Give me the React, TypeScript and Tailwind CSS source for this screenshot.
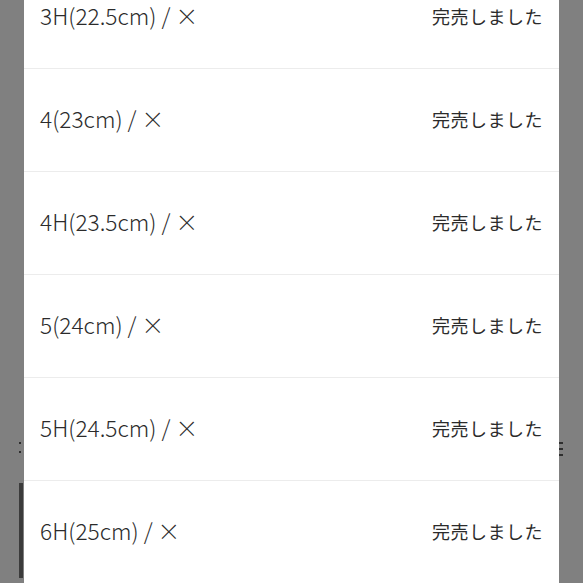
const sizes = [
  '3H(22.5cm)',
  '4(23cm)',
  '4H(23.5cm)',
  '5(24cm)',
  '5H(24.5cm)',
  '6H(25cm)',
];

export default function App() {
  return (
    <div className="flex h-[583px] w-[583px] overflow-hidden bg-[#808080] font-['Noto_Sans_CJK_JP',sans-serif]">
      {/* left gutter: page behind the overlay */}
      <div className="flex w-[24px] shrink-0 flex-col pl-[19px]">
        <div className="mt-[442px] h-[2px] w-[2px] bg-[#2e2e2e]" />
        <div className="mt-[7px] h-[2px] w-[2px] bg-[#2e2e2e]" />
        <div className="mt-[30px] h-[95px] w-[4px] bg-[#3b3b3b]" />
      </div>

      {/* size list sheet */}
      <div className="w-[535px] shrink-0 bg-white">
        <ul className="mt-[-34px]">
          {sizes.map((s) => (
            <li
              key={s}
              className="flex h-[103px] items-center justify-between border-b border-[#ececec] px-4 pb-[1px] text-[#2b2b2b]"
            >
              <span className="text-[22.7px] font-light">{s} / ×</span>
              <span className="text-[18px] tracking-[0.5px]">完売しました</span>
            </li>
          ))}
        </ul>
      </div>

      {/* right gutter */}
      <div className="flex flex-1 flex-col">
        <div className="mt-[442px] flex flex-col gap-[4px]">
          <div className="h-[2px] w-[4px] bg-[#2e2e2e]" />
          <div className="h-[2px] w-[4px] bg-[#2e2e2e]" />
          <div className="h-[2px] w-[4px] bg-[#2e2e2e]" />
        </div>
      </div>
    </div>
  );
}
